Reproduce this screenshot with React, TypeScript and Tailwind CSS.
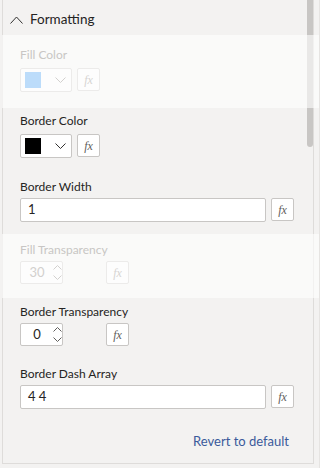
import React from 'react';

const font = "font-['Lato','Liberation_Sans',sans-serif]";

// Small "fx" button next to each property
const FxButton: React.FC<{ disabled?: boolean }> = ({ disabled }) => (
  <div
    className={`w-[23px] h-[23px] flex items-center justify-center border rounded-[2px] ${
      disabled ? 'border-[#ecebea] bg-[#fdfdfd]' : 'border-[#c8c6c4] bg-white'
    }`}
  >
    <span
      className={`font-['Liberation_Serif',serif] italic text-[12px] leading-none ${
        disabled ? 'text-[#d6d4d2]' : 'text-[#605e5c]'
      }`}
    >
      fx
    </span>
  </div>
);

const ChevronDown: React.FC<{ color: string }> = ({ color }) => (
  <svg width="11" height="6" viewBox="0 0 11 6" fill="none">
    <path d="M0.5 0.5 L5.5 5.5 L10.5 0.5" stroke={color} strokeWidth="1" />
  </svg>
);

const ColorPicker: React.FC<{ swatch: string; disabled?: boolean }> = ({ swatch, disabled }) => (
  <div className="flex gap-[5px]">
    <div
      className={`w-[52px] h-[24px] flex items-center border rounded-[2px] pl-[4px] ${
        disabled ? 'border-[#ecebea] bg-[#fdfdfd]' : 'border-[#c8c6c4] bg-white'
      }`}
    >
      <div className={`w-[16px] h-[16px] ${swatch}`} />
      <div className="ml-[14px]">
        <ChevronDown color={disabled ? '#d2d0ce' : '#323130'} />
      </div>
    </div>
    <FxButton disabled={disabled} />
  </div>
);

const Spinner: React.FC<{ value: string; disabled?: boolean }> = ({ value, disabled }) => {
  const c = disabled ? '#d2d0ce' : '#605e5c';
  return (
    <div className="flex">
      <div
        className={`w-[43px] h-[23px] flex items-center border rounded-[2px] ${
          disabled ? 'border-[#ecebea] bg-[#fdfdfd]' : 'border-[#c8c6c4] bg-white'
        }`}
      >
        <span
          className={`w-[32px] text-center text-[13px] leading-none ${
            disabled ? 'text-[#d2d0ce]' : 'text-[#252423]'
          }`}
        >
          {value}
        </span>
        <div className="flex flex-col gap-[5px]">
          <svg width="9" height="5" viewBox="0 0 9 5" fill="none">
            <path d="M0.5 4.5 L4.5 0.5 L8.5 4.5" stroke={c} strokeWidth="1" />
          </svg>
          <svg width="9" height="5" viewBox="0 0 9 5" fill="none">
            <path d="M0.5 0.5 L4.5 4.5 L8.5 0.5" stroke={c} strokeWidth="1" />
          </svg>
        </div>
      </div>
      <div className="ml-[43px]">
        <FxButton disabled={disabled} />
      </div>
    </div>
  );
};

const TextBox: React.FC<{ value: string }> = ({ value }) => (
  <div className="flex gap-[5px]">
    <div className="w-[246px] h-[24px] flex items-center border border-[#c8c6c4] rounded-[2px] bg-white pl-[7px] text-[13px] text-[#252423]">
      {value}
    </div>
    <FxButton />
  </div>
);

const Label: React.FC<{ children: React.ReactNode; disabled?: boolean }> = ({ children, disabled }) => (
  <div className={`h-[16px] leading-[16px] text-[12px] ${disabled ? 'text-[#c8c6c4]' : 'text-[#252423]'}`}>
    {children}
  </div>
);

export default function App() {
  return (
    <div className={`relative w-[320px] h-[468px] bg-[#f3f2f1] border-r border-[#e6e4e2] overflow-hidden ${font}`}>
      <div className="relative ml-[2px] w-[312px] h-[464px] border-l border-r border-b border-[#dedcda]">
        {/* scrollbar thumb */}
        <div className="absolute right-0 top-0 w-[6px] h-[147px] bg-[#c8c6c4] rounded-b-[3px]" />

        <div className="relative flex items-center h-[35px] pl-[7px] pt-[4px]">
          <svg width="13" height="8" viewBox="0 0 13 8" fill="none">
            <path d="M0.5 7.5 L6.5 1 L12.5 7.5" stroke="#323130" strokeWidth="1" />
          </svg>
          <span className="ml-[7px] text-[13.5px] text-[#252423]">Formatting</span>
        </div>

        {/* Fill Color (disabled) */}
        <div className="relative z-10 -ml-px -mr-[8px] h-[73px] bg-white/60 pl-[18px] pt-[12px]">
          <Label disabled>Fill Color</Label>
          <div className="mt-[5px]">
            <ColorPicker swatch="bg-[#bcdcfa]" disabled />
          </div>
        </div>

        <div className="pl-[17px] pt-[5px]">
          <Label>Border Color</Label>
          <div className="mt-[5px]">
            <ColorPicker swatch="bg-black" />
          </div>
        </div>

        <div className="pl-[17px] mt-[21px]">
          <Label>Border Width</Label>
          <div className="mt-[3px]">
            <TextBox value="1" />
          </div>
        </div>

        {/* Fill Transparency (disabled) */}
        <div className="relative z-10 -ml-px -mr-[8px] mt-[12px] h-[64px] bg-white/60 pl-[18px] pt-[8px]">
          <Label disabled>Fill Transparency</Label>
          <div className="mt-[3px]">
            <Spinner value="30" disabled />
          </div>
        </div>

        <div className="pl-[17px] pt-[6px]">
          <Label>Border Transparency</Label>
          <div className="mt-[3px]">
            <Spinner value="0" />
          </div>
        </div>

        <div className="pl-[17px] mt-[20px]">
          <Label>Border Dash Array</Label>
          <div className="mt-[3px]">
            <TextBox value="4 4" />
          </div>
        </div>

        <div className="flex justify-end pr-[24px] mt-[24px]">
          <span className="h-[16px] leading-[16px] text-[13px] text-[#3a5a9b]">Revert to default</span>
        </div>
      </div>
    </div>
  );
}
